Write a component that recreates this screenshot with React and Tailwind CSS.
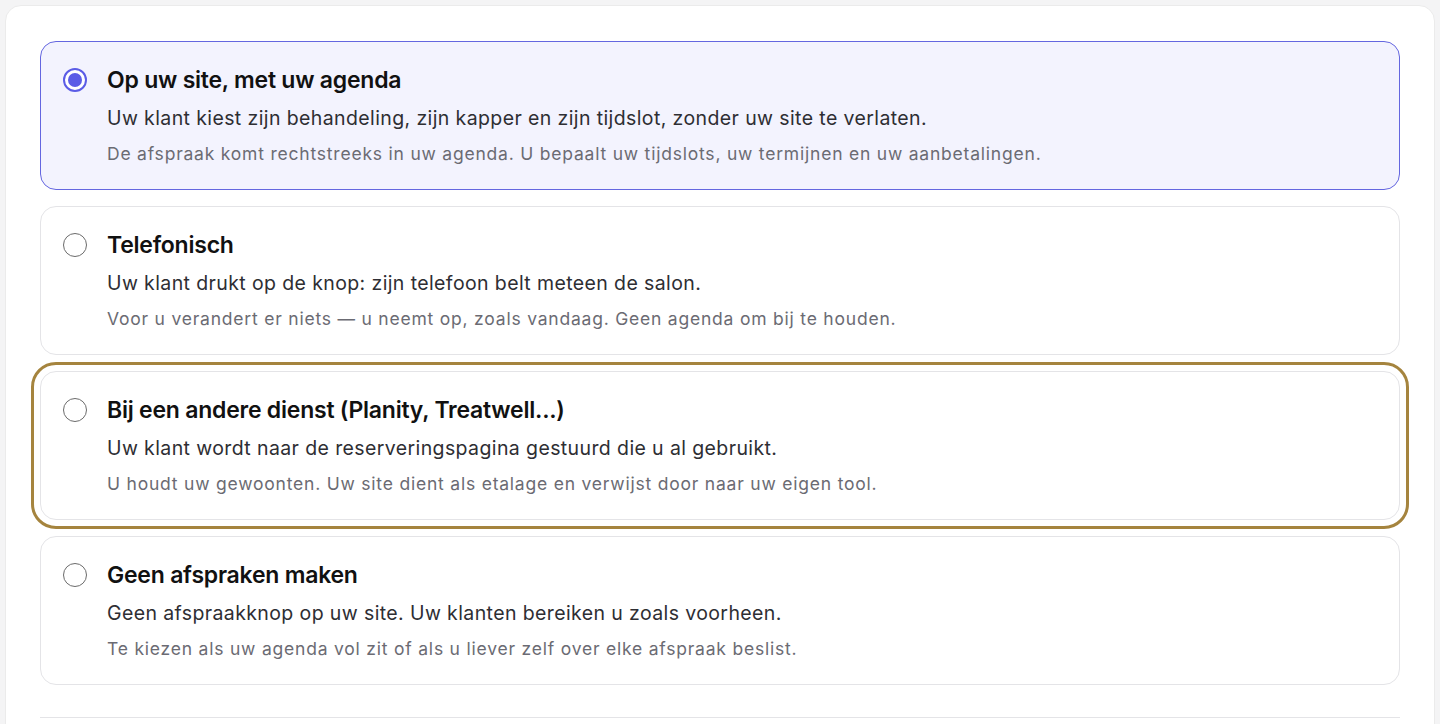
const OPTIONS = [
  {
    id: 'site',
    title: 'Op uw site, met uw agenda',
    lead: 'Uw klant kiest zijn behandeling, zijn kapper en zijn tijdslot, zonder uw site te verlaten.',
    note: 'De afspraak komt rechtstreeks in uw agenda. U bepaalt uw tijdslots, uw termijnen en uw aanbetalingen.',
  },
  {
    id: 'phone',
    title: 'Telefonisch',
    lead: 'Uw klant drukt op de knop: zijn telefoon belt meteen de salon.',
    note: 'Voor u verandert er niets — u neemt op, zoals vandaag. Geen agenda om bij te houden.',
  },
  {
    id: 'other',
    title: 'Bij een andere dienst (Planity, Treatwell...)',
    lead: 'Uw klant wordt naar de reserveringspagina gestuurd die u al gebruikt.',
    note: 'U houdt uw gewoonten. Uw site dient als etalage en verwijst door naar uw eigen tool.',
  },
  {
    id: 'none',
    title: 'Geen afspraken maken',
    lead: 'Geen afspraakknop op uw site. Uw klanten bereiken u zoals voorheen.',
    note: 'Te kiezen als uw agenda vol zit of als u liever zelf over elke afspraak beslist.',
  },
]

function Radio({ checked }) {
  return checked ? (
    <span className="w-6 h-6 rounded-full border-2 border-[#5b5ce6] bg-white flex items-center justify-center shrink-0">
      <span className="w-[14px] h-[14px] rounded-full bg-[#5b5ce6]" />
    </span>
  ) : (
    <span className="w-6 h-6 rounded-full border-[1.5px] border-[#6b6b6b] bg-white shrink-0" />
  )
}

export default function App() {
  const selected = 'site'
  const focused = 'other'

  return (
    <div className="min-h-screen bg-[#f4f4f5] p-[5px] font-['Inter',sans-serif]">
      <div className="bg-white rounded-[16px] border border-[#ebebeb] px-[34px] pt-[35px] pb-[40px]">
        <div className="flex flex-col gap-4">
          {OPTIONS.map(opt => {
            const isSel = opt.id === selected
            return (
              <label
                key={opt.id}
                className={`flex items-start gap-5 rounded-2xl border pl-[22px] pr-6 pt-[23px] pb-[23px] cursor-pointer
                  ${isSel ? 'bg-[#f3f3fe] border-[#6466e0]' : 'bg-white border-[#e4e4e7]'}
                  ${opt.id === focused ? 'outline-[3.5px] outline-solid outline-[#a5843e] outline-offset-[6px]' : ''}`}
              >
                <span className="h-[30px] flex items-center">
                  <Radio checked={isSel} />
                </span>
                <div className="flex flex-col">
                  <span className="text-[23px] leading-[30px] font-semibold text-[#111111] tracking-[-0.01em]">{opt.title}</span>
                  <span className="text-[19.5px] leading-[28px] text-[#2e2e33] mt-[9px] tracking-[0.02em]">{opt.lead}</span>
                  <span className="text-[17.5px] leading-[24px] text-[#6b6b73] mt-[10px] tracking-[0.045em]">{opt.note}</span>
                </div>
              </label>
            )
          })}
        </div>
        <div className="mt-8 border-t border-[#e4e4e7]" />
      </div>
    </div>
  )
}
